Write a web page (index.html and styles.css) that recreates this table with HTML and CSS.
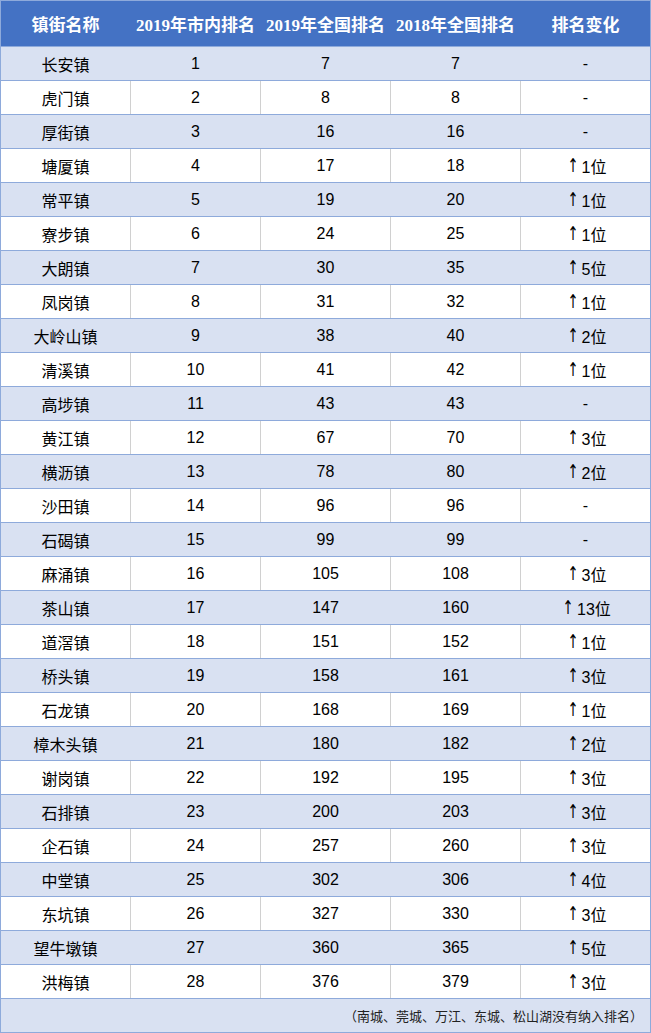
FILE: index.html
```html
<!DOCTYPE html>
<html lang="zh-CN">
<head>
<meta charset="utf-8">
<title>镇街排名</title>
<link rel="stylesheet" href="styles.css">
</head>
<body>
<div class="table">
  <div class="row head">
    <div class="cell">镇街名称</div>
    <div class="cell">2019年市内排名</div>
    <div class="cell">2019年全国排名</div>
    <div class="cell">2018年全国排名</div>
    <div class="cell">排名变化</div>
  </div>
  <div class="row shade"><div class="cell">长安镇</div><div class="cell">1</div><div class="cell">7</div><div class="cell">7</div><div class="cell">-</div></div>
  <div class="row"><div class="cell">虎门镇</div><div class="cell">2</div><div class="cell">8</div><div class="cell">8</div><div class="cell">-</div></div>
  <div class="row shade"><div class="cell">厚街镇</div><div class="cell">3</div><div class="cell">16</div><div class="cell">16</div><div class="cell">-</div></div>
  <div class="row"><div class="cell">塘厦镇</div><div class="cell">4</div><div class="cell">17</div><div class="cell">18</div><div class="cell"><span class="up">↑</span>1位</div></div>
  <div class="row shade"><div class="cell">常平镇</div><div class="cell">5</div><div class="cell">19</div><div class="cell">20</div><div class="cell"><span class="up">↑</span>1位</div></div>
  <div class="row"><div class="cell">寮步镇</div><div class="cell">6</div><div class="cell">24</div><div class="cell">25</div><div class="cell"><span class="up">↑</span>1位</div></div>
  <div class="row shade"><div class="cell">大朗镇</div><div class="cell">7</div><div class="cell">30</div><div class="cell">35</div><div class="cell"><span class="up">↑</span>5位</div></div>
  <div class="row"><div class="cell">凤岗镇</div><div class="cell">8</div><div class="cell">31</div><div class="cell">32</div><div class="cell"><span class="up">↑</span>1位</div></div>
  <div class="row shade"><div class="cell">大岭山镇</div><div class="cell">9</div><div class="cell">38</div><div class="cell">40</div><div class="cell"><span class="up">↑</span>2位</div></div>
  <div class="row"><div class="cell">清溪镇</div><div class="cell">10</div><div class="cell">41</div><div class="cell">42</div><div class="cell"><span class="up">↑</span>1位</div></div>
  <div class="row shade"><div class="cell">高埗镇</div><div class="cell">11</div><div class="cell">43</div><div class="cell">43</div><div class="cell">-</div></div>
  <div class="row"><div class="cell">黄江镇</div><div class="cell">12</div><div class="cell">67</div><div class="cell">70</div><div class="cell"><span class="up">↑</span>3位</div></div>
  <div class="row shade"><div class="cell">横沥镇</div><div class="cell">13</div><div class="cell">78</div><div class="cell">80</div><div class="cell"><span class="up">↑</span>2位</div></div>
  <div class="row"><div class="cell">沙田镇</div><div class="cell">14</div><div class="cell">96</div><div class="cell">96</div><div class="cell">-</div></div>
  <div class="row shade"><div class="cell">石碣镇</div><div class="cell">15</div><div class="cell">99</div><div class="cell">99</div><div class="cell">-</div></div>
  <div class="row"><div class="cell">麻涌镇</div><div class="cell">16</div><div class="cell">105</div><div class="cell">108</div><div class="cell"><span class="up">↑</span>3位</div></div>
  <div class="row shade"><div class="cell">茶山镇</div><div class="cell">17</div><div class="cell">147</div><div class="cell">160</div><div class="cell"><span class="up">↑</span>13位</div></div>
  <div class="row"><div class="cell">道滘镇</div><div class="cell">18</div><div class="cell">151</div><div class="cell">152</div><div class="cell"><span class="up">↑</span>1位</div></div>
  <div class="row shade"><div class="cell">桥头镇</div><div class="cell">19</div><div class="cell">158</div><div class="cell">161</div><div class="cell"><span class="up">↑</span>3位</div></div>
  <div class="row"><div class="cell">石龙镇</div><div class="cell">20</div><div class="cell">168</div><div class="cell">169</div><div class="cell"><span class="up">↑</span>1位</div></div>
  <div class="row shade"><div class="cell">樟木头镇</div><div class="cell">21</div><div class="cell">180</div><div class="cell">182</div><div class="cell"><span class="up">↑</span>2位</div></div>
  <div class="row"><div class="cell">谢岗镇</div><div class="cell">22</div><div class="cell">192</div><div class="cell">195</div><div class="cell"><span class="up">↑</span>3位</div></div>
  <div class="row shade"><div class="cell">石排镇</div><div class="cell">23</div><div class="cell">200</div><div class="cell">203</div><div class="cell"><span class="up">↑</span>3位</div></div>
  <div class="row"><div class="cell">企石镇</div><div class="cell">24</div><div class="cell">257</div><div class="cell">260</div><div class="cell"><span class="up">↑</span>3位</div></div>
  <div class="row shade"><div class="cell">中堂镇</div><div class="cell">25</div><div class="cell">302</div><div class="cell">306</div><div class="cell"><span class="up">↑</span>4位</div></div>
  <div class="row"><div class="cell">东坑镇</div><div class="cell">26</div><div class="cell">327</div><div class="cell">330</div><div class="cell"><span class="up">↑</span>3位</div></div>
  <div class="row shade"><div class="cell">望牛墩镇</div><div class="cell">27</div><div class="cell">360</div><div class="cell">365</div><div class="cell"><span class="up">↑</span>5位</div></div>
  <div class="row"><div class="cell">洪梅镇</div><div class="cell">28</div><div class="cell">376</div><div class="cell">379</div><div class="cell"><span class="up">↑</span>3位</div></div>
  <div class="note">（南城、莞城、万江、东城、松山湖没有纳入排名）</div>
</div>
</body>
</html>
```
FILE: styles.css
```css
html, body {
  margin: 0;
  padding: 0;
  background: #ffffff;
}

.table {
  width: 651px;
  box-sizing: border-box;
  border: 1px solid #8eaadb;
  border-bottom: none;
  font-family: "Liberation Sans", "Noto Sans CJK SC", sans-serif;
  font-size: 16px;
  color: #000000;
}

.row {
  display: grid;
  grid-template-columns: 129px repeat(4, 130px);
  height: 34px;
  box-sizing: border-box;
  border-bottom: 1px solid #8eaadb;
  background: #ffffff;
}

.row .cell {
  display: flex;
  align-items: center;
  justify-content: center;
  white-space: nowrap;
  padding-top: 1px;
}

.row .cell + .cell {
  border-left: 1px solid #d0d0d0;
}

.row.shade {
  background: #d9e1f2;
}

.row.shade .cell + .cell {
  border-left-color: #d9e1f2;
}

.up {
  font-family: "DejaVu Sans", sans-serif;
  font-size: 19px;
  line-height: 1;
  margin-right: 1px;
  transform: scaleX(0.7) translateY(-1px);
}

.row.head {
  height: 46px;
  background: #4472c4;
  color: #ffffff;
  font-family: "Liberation Serif", "Noto Sans CJK SC", serif;
  font-weight: bold;
  font-size: 17px;
}

.row.head .cell {
  padding-top: 0;
}

.row.head .cell + .cell {
  border-left-color: #4472c4;
}

.note {
  height: 34px;
  box-sizing: border-box;
  border-bottom: 1px solid #8eaadb;
  background: #d9e1f2;
  display: flex;
  align-items: center;
  justify-content: flex-end;
  padding-right: 7px;
  font-size: 13px;
  color: #222222;
}
```
